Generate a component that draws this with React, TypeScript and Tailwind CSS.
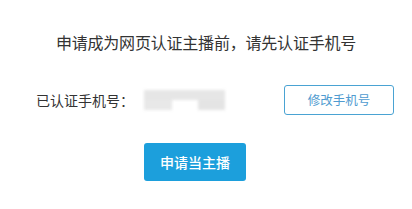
import React from "react";

export default function App() {
  return (
    <div
      className="h-[209px] w-[412px] bg-white text-[#333]"
      style={{ fontFamily: '"Microsoft YaHei", "Noto Sans CJK SC", sans-serif' }}
    >
      <div className="flex flex-col pt-[31px]">
        <p className="text-center text-[16px] leading-[22px] tracking-[-0.2px]">
          申请成为网页认证主播前，请先认证手机号
        </p>

        <div className="mt-[32px] flex h-[30px] items-center pl-[36px]">
          <span className="w-[108px] text-[14px] leading-[20px]">已认证手机号：</span>
          <div className="flex h-[20px] w-[81px] flex-col blur-[1.5px]">
            <div className="h-[10px] w-full bg-[#e6e6e6]" />
            <div className="flex h-[10px] w-full justify-between">
              <div className="h-full w-[28px] bg-[#e8e8e8]" />
              <div className="h-full w-[27px] bg-[#e4e4e4]" />
            </div>
          </div>
          <button className="ml-[59px] flex h-[30px] w-[110px] items-center justify-center rounded-[3px] border border-[#4aa3d3] text-[12.5px] text-[#4f9bd0]">
            修改手机号
          </button>
        </div>

        <button className="ml-[144px] mt-[28px] flex h-[38px] w-[102px] items-center justify-center rounded-[3px] bg-[#1c9fdc] text-[14px] font-medium text-white">
          申请当主播
        </button>
      </div>
    </div>
  );
}
